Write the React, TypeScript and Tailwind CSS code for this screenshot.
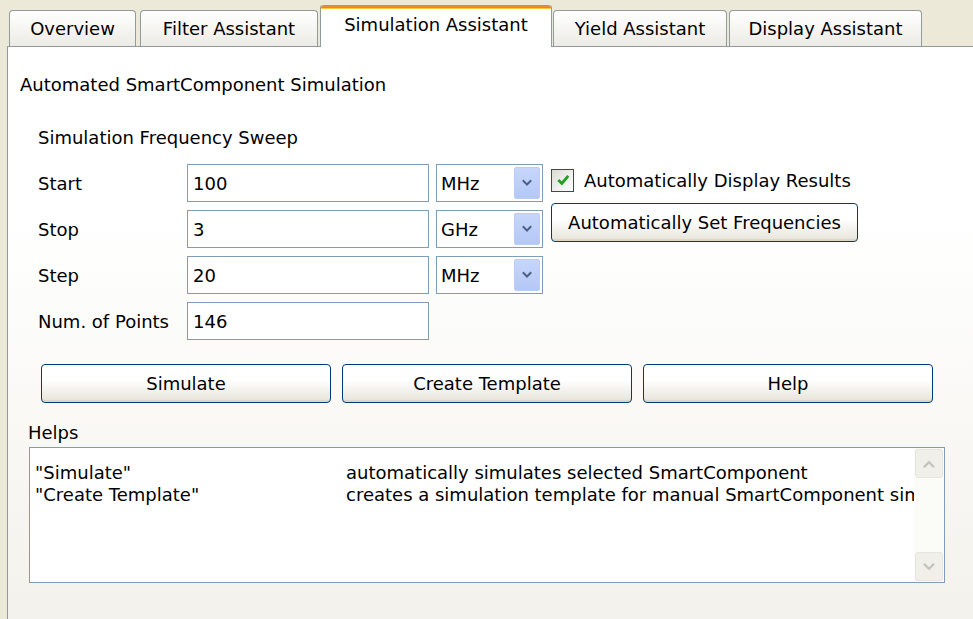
import type { ReactNode } from 'react';

const tabs = [
  { label: 'Overview', w: 'w-[127px]', ml: 'ml-[9px]' },
  { label: 'Filter Assistant', w: 'w-[178px]', ml: 'ml-[4px]' },
  { label: 'Simulation Assistant', w: 'w-[232px]', ml: 'ml-[2px]', active: true },
  { label: 'Yield Assistant', w: 'w-[174px]', ml: 'ml-[1px]' },
  { label: 'Display Assistant', w: 'w-[193px]', ml: 'ml-[2px]' },
];

const sweep = [
  { label: 'Start', value: '100', unit: 'MHz' },
  { label: 'Stop', value: '3', unit: 'GHz' },
  { label: 'Step', value: '20', unit: 'MHz' },
  { label: 'Num. of Points', value: '146' },
];

function Chevron({ className, up }: { className?: string; up?: boolean }) {
  return (
    <svg viewBox="0 0 10 8" className={className} fill="none">
      <path
        d={up ? 'M1.5 6 L5 2.5 L8.5 6' : 'M1.5 2 L5 5.5 L8.5 2'}
        stroke="currentColor"
        strokeWidth="2"
        strokeLinecap="square"
      />
    </svg>
  );
}

function XpButton({ children, className }: { children: ReactNode; className?: string }) {
  return (
    <button
      className={`h-[39px] rounded-[4px] border border-[#003c74] bg-gradient-to-b from-white from-40% to-[#e6e3d9] text-black shadow-[inset_0_-2px_0_#dcd8c8] ${className ?? ''}`}
    >
      {children}
    </button>
  );
}

function UnitSelect({ unit }: { unit: string }) {
  return (
    <div className="w-[107px] h-[38px] border border-[#7f9db9] bg-white flex items-center justify-between pl-[4px] pr-[2px]">
      <span>{unit}</span>
      <div className="w-[26px] h-[32px] rounded-[2px] bg-gradient-to-b from-[#c6d6fc] to-[#b4c8f6] border border-[#b9cdf7] flex items-center justify-center text-[#4d6185]">
        <Chevron className="w-[10px] h-[8px]" />
      </div>
    </div>
  );
}

export default function App() {
  return (
    <div
      className="w-[973px] h-[619px] bg-[#ece9d8] flex flex-col overflow-hidden text-[18px] text-black"
      style={{ fontFamily: "Tahoma, 'DejaVu Sans', sans-serif" }}
    >
      {/* Tab strip */}
      <div className="h-[47px] flex items-end relative z-10">
        {tabs.map((t) =>
          t.active ? (
            <div
              key={t.label}
              className={`${t.w} ${t.ml} h-[42px] bg-white border-x border-[#919b9c] rounded-t-[3px] flex flex-col`}
            >
              <div className="h-[4px] rounded-t-[3px] bg-[#e68b2c] border-b border-[#ffc73c]" />
              <div className="flex-1 flex items-center justify-center pb-[8px]">{t.label}</div>
            </div>
          ) : (
            <div
              key={t.label}
              className={`${t.w} ${t.ml} h-[36px] mb-[1px] rounded-t-[4px] border border-b-0 border-[#919b9c] bg-gradient-to-b from-white to-[#ecebe5] flex items-center justify-center`}
            >
              {t.label}
            </div>
          ),
        )}
      </div>

      {/* Tab page */}
      <div className="flex-1 ml-[7px] -mt-[1px] border-l border-t border-[#919b9c] bg-gradient-to-b from-white from-30% to-[#f3f2ec] pl-[12px]">
        <div className="mt-[27px] leading-[22px]">Automated SmartComponent Simulation</div>

        <div className="mt-[31px] ml-[18px] leading-[22px]">Simulation Frequency Sweep</div>

        <div className="mt-[15px] ml-[18px] flex">
          <div className="flex flex-col gap-[8px]">
            {sweep.map((row) => (
              <div key={row.label} className="flex items-center h-[38px]">
                <span className="w-[149px] whitespace-nowrap">{row.label}</span>
                <div className="w-[242px] h-[38px] border border-[#7f9db9] bg-white flex items-center pl-[5px]">
                  {row.value}
                </div>
                {row.unit && (
                  <div className="ml-[7px]">
                    <UnitSelect unit={row.unit} />
                  </div>
                )}
              </div>
            ))}
          </div>

          <div className="ml-[8px] pt-[4px] flex flex-col items-start">
            <div className="flex items-center h-[24px] whitespace-nowrap">
              <div className="w-[23px] h-[23px] border border-[#1c5180] bg-gradient-to-br from-[#dcdcd6] to-white flex items-center justify-center">
                <svg viewBox="0 0 12 12" className="w-[14px] h-[14px]" fill="none">
                  <path d="M2 6 L5 9 L10.5 2.5" stroke="#21a121" strokeWidth="2.4" />
                </svg>
              </div>
              <span className="ml-[10px]">Automatically Display Results</span>
            </div>
            <XpButton className="mt-[11px] w-[307px] h-[38px]">Automatically Set Frequencies</XpButton>
          </div>
        </div>

        <div className="mt-[24px] ml-[21px] flex gap-[11px]">
          <XpButton className="w-[290px]">Simulate</XpButton>
          <XpButton className="w-[290px]">Create Template</XpButton>
          <XpButton className="w-[290px]">Help</XpButton>
        </div>

        <div className="mt-[19px] ml-[8px] leading-[22px]">Helps</div>

        <div className="mt-[3px] ml-[9px] w-[916px] h-[136px] border border-[#7f9db9] bg-white flex">
          <div className="flex-1 overflow-hidden whitespace-nowrap pl-[5px] pt-[14px] leading-[22px]">
            <div className="flex">
              <span className="w-[311px] shrink-0">"Simulate"</span>
              <span>automatically simulates selected SmartComponent</span>
            </div>
            <div className="flex">
              <span className="w-[311px] shrink-0">"Create Template"</span>
              <span>creates a simulation template for manual SmartComponent simulation</span>
            </div>
          </div>
          {/* Scrollbar */}
          <div className="w-[30px] bg-[#fbfbf8] flex flex-col justify-between p-[1px]">
            <div className="h-[29px] rounded-[3px] bg-[#f0efe9] border border-[#e6e4dc] flex items-center justify-center text-[#c5c5c0]">
              <Chevron up className="w-[12px] h-[10px]" />
            </div>
            <div className="h-[29px] rounded-[3px] bg-[#f0efe9] border border-[#e6e4dc] flex items-center justify-center text-[#c5c5c0]">
              <Chevron className="w-[12px] h-[10px]" />
            </div>
          </div>
        </div>
      </div>
    </div>
  );
}
